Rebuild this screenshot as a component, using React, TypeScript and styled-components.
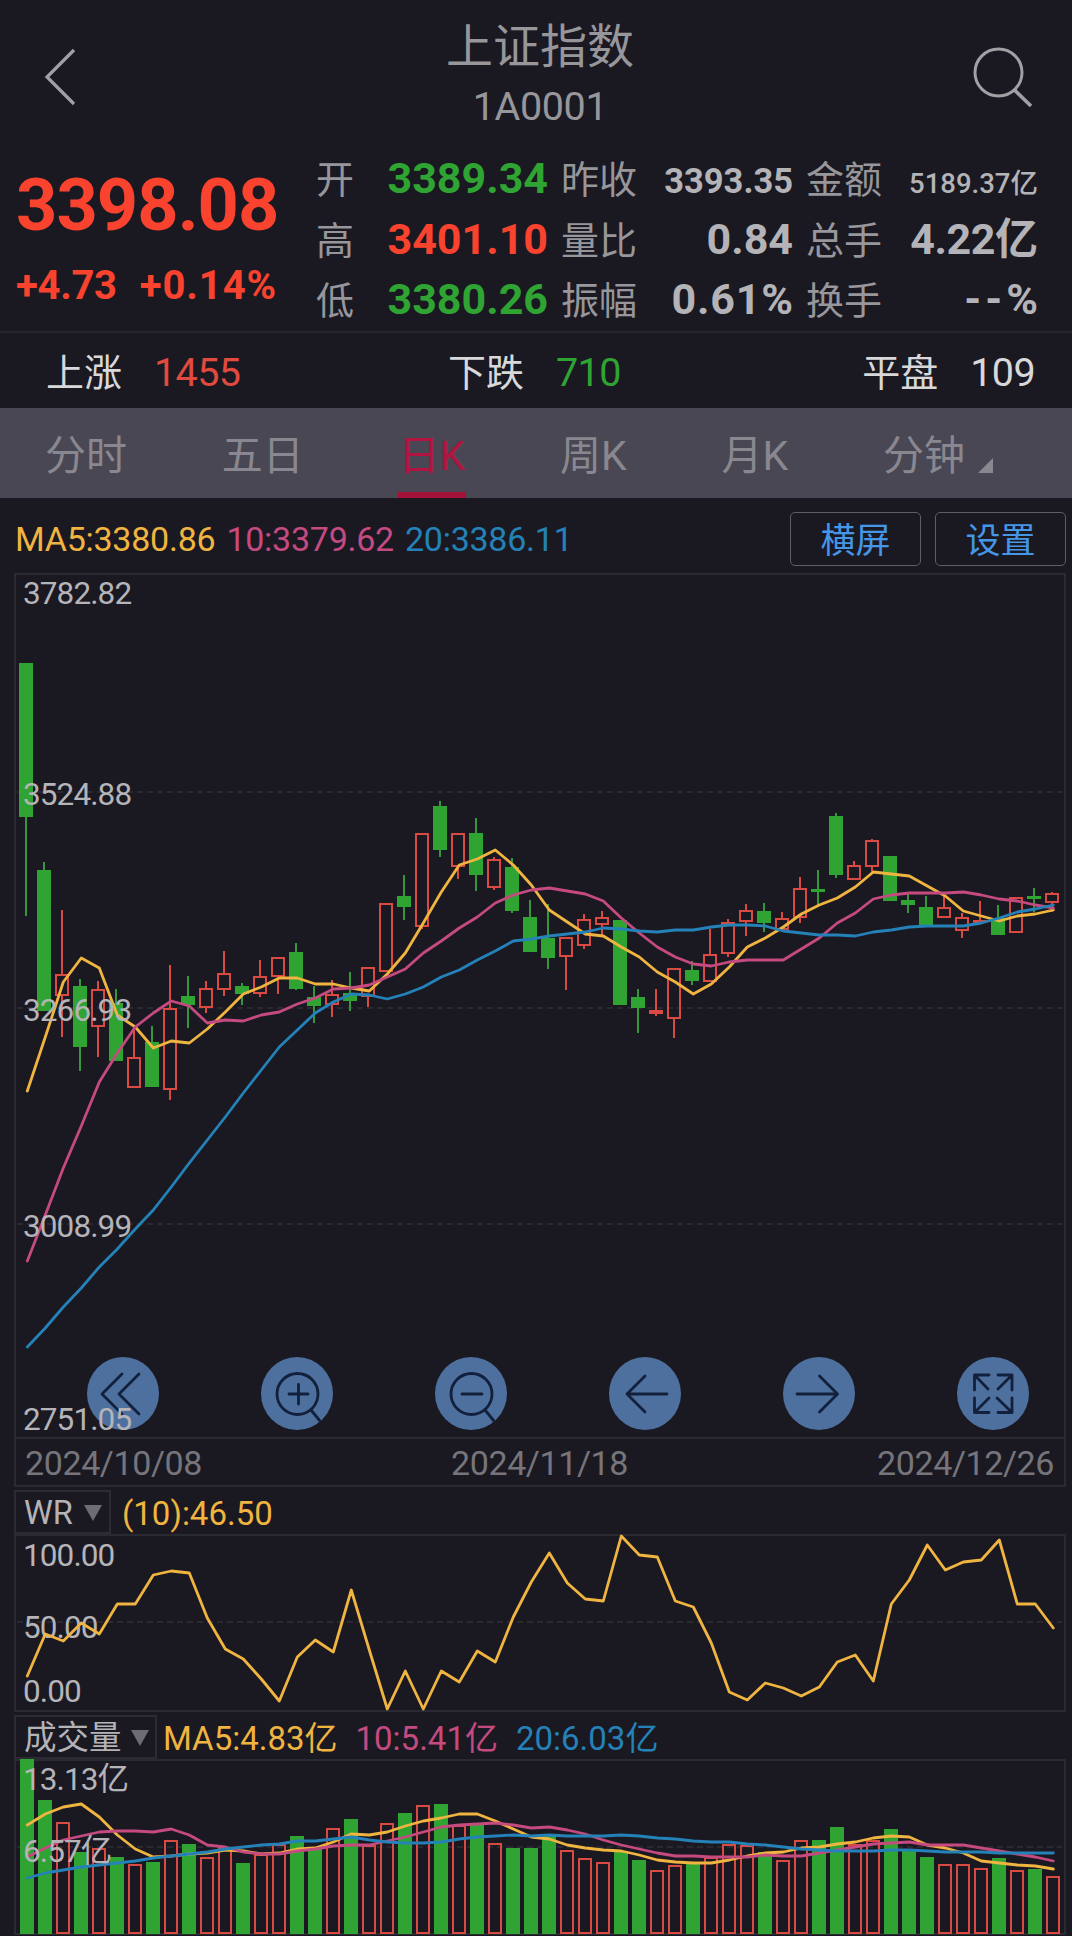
import React from "react";
import styled, { createGlobalStyle } from "styled-components";

const C = {
  bg: "#1a1922",
  line: "#2a2a32",
  dim: "#97969b",
  text: "#b4b3b7",
  red: "#f9432f",
  softRed: "#e04a3f",
  green: "#2fa433",
  yellow: "#f0b440",
  pink: "#c54a80",
  blue: "#2482b8",
};

const FONT = 'Roboto, "Noto Sans CJK SC", sans-serif';

const Global = createGlobalStyle`
  * { box-sizing: border-box; }
  body { margin: 0; background: ${C.bg}; }
`;

const Screen = styled.main`
  width: 1072px;
  height: 1936px;
  overflow: hidden;
  display: flex;
  flex-direction: column;
  background: ${C.bg};
  color: ${C.text};
  font-family: ${FONT};
`;

/* ---------- header ---------- */

const Header = styled.header`
  height: 148px;
  flex: none;
  display: flex;
  justify-content: space-between;
  padding: 46px 39px 0 44px;
`;

const Titles = styled.div`
  display: flex;
  flex-direction: column;
  align-items: center;
  margin-top: -30px;
  padding-left: 31px;
  color: ${C.dim};
`;

const Title = styled.h1`
  margin: 0;
  font-size: 47px;
  line-height: 62px;
  font-weight: 400;
`;

const Code = styled.div`
  font-size: 39.5px;
  line-height: 46px;
  margin-top: 6px;
  letter-spacing: -0.4px;
`;

const HeaderIcon = styled.svg`
  display: block;
  fill: none;
  stroke: #a1a0a5;
  stroke-width: 3;
`;

/* ---------- quote ---------- */

const Quote = styled.section`
  height: 185px;
  flex: none;
  display: flex;
  border-bottom: 2px solid #25242c;
`;

const Main = styled.div`
  width: 316px;
  padding: 21px 0 0 16px;
  color: ${C.red};
  font-weight: 700;
`;

const Price = styled.div`
  font-size: 72px;
  line-height: 74px;
  letter-spacing: -0.9px;
`;

const Change = styled.div`
  display: flex;
  gap: 23px;
  margin-top: 21px;
  font-size: 40px;
  line-height: 44px;
  letter-spacing: -0.3px;
`;

const Percent = styled.span`
  letter-spacing: 0.9px;
`;

const Stats = styled.div`
  display: grid;
  grid-template-columns: 232px 232px 232px;
  grid-template-rows: repeat(3, 60.5px);
  column-gap: 13px;
`;

const Stat = styled.div`
  display: flex;
  align-items: baseline;
  justify-content: space-between;
`;

const StatLabel = styled.span`
  font-size: 38px;
  line-height: 65px;
  color: ${C.dim};
`;

const StatValue = styled.span<{ $color?: string; $size?: number; $weight?: number; $track?: number }>`
  line-height: 1;
  font-weight: ${(p) => p.$weight ?? 700};
  font-size: ${(p) => p.$size ?? 43}px;
  color: ${(p) => p.$color ?? C.text};
  letter-spacing: ${(p) => p.$track ?? 0}px;
  margin-right: ${(p) => -(p.$track ?? 0)}px;
`;

/* ---------- market breadth ---------- */

const Breadth = styled.section`
  height: 75px;
  flex: none;
  display: grid;
  grid-template-columns: 402px 1fr auto;
  padding: 3px 37px 0 46px;
  font-size: 38px;
  line-height: 74px;
  color: #d8d8da;
`;

const BreadthItem = styled.div`
  display: flex;
  gap: 32px;
`;

const Count = styled.span<{ $color?: string }>`
  font-size: 39.5px;
  letter-spacing: -0.6px;
  color: ${(p) => p.$color ?? "inherit"};
`;

/* ---------- tabs ---------- */

const Tabs = styled.nav`
  height: 90px;
  flex: none;
  display: flex;
  justify-content: space-between;
  padding: 0 79px 0 45px;
  background: #494753;
`;

const Tab = styled.div<{ $active?: boolean }>`
  position: relative;
  display: flex;
  font-size: 41px;
  line-height: 97px;
  color: ${(p) => (p.$active ? "#b01540" : "#89878f")};
  &::after {
    content: "";
    display: ${(p) => (p.$active ? "block" : "none")};
    position: absolute;
    left: -1px;
    right: -1px;
    bottom: 0;
    height: 6px;
    background: #a51239;
  }
`;

const Corner = styled.svg`
  display: block;
  margin: 50px 0 0 13px;
  fill: #89878f;
`;

/* ---------- legend ---------- */

const Legend = styled.section`
  height: 75px;
  flex: none;
  display: flex;
  align-items: center;
  padding: 6px 6px 0 15px;
`;

const LegendItem = styled.span<{ $color: string; $gap: number }>`
  font-size: 34px;
  line-height: 44px;
  margin-right: ${(p) => p.$gap}px;
  color: ${(p) => p.$color};
  letter-spacing: -0.25px;
`;

const Actions = styled.div`
  display: flex;
  gap: 14px;
  margin-left: auto;
`;

const Action = styled.button`
  width: 131px;
  height: 54px;
  padding: 5px 0 0;
  border: 1.5px solid #5f5e66;
  border-radius: 5px;
  background: transparent;
  color: #4596e6;
  font: 35px/48px ${FONT};
`;

/* ---------- charts ---------- */

const Panel = styled.section`
  position: relative;
  flex: none;
`;

const Plot = styled.svg`
  position: relative;
  z-index: 1;
  display: block;
  font-family: ${FONT};
`;

const Tools = styled.div`
  position: absolute;
  left: 87px;
  right: 43px;
  bottom: 9px;
  display: flex;
  justify-content: space-between;
`;

const Tool = styled.svg`
  width: 72px;
  height: 73px;
  border-radius: 50%;
  background: #4e709f;
  fill: none;
  stroke: #12203c;
  stroke-width: 2.8;
  stroke-linecap: round;
  stroke-linejoin: round;
`;

const Dates = styled.div`
  height: 48px;
  flex: none;
  display: flex;
  justify-content: space-between;
  margin: 0 6px 0 14px;
  padding: 1px 10px 0 9px;
  border: solid ${C.line};
  border-width: 0 2px 2px 2px;
  font-size: 34px;
  line-height: 47px;
  letter-spacing: -0.4px;
  color: #76757b;
`;

const IndicatorBar = styled.div`
  height: 47px;
  flex: none;
  display: flex;
  align-items: center;
  padding: 2px 0 0 14px;
`;

const Picker = styled.div<{ $width: number; $gap: number }>`
  width: ${(p) => p.$width}px;
  height: 44px;
  padding: 3px 0 0 8px;
  display: flex;
  align-items: center;
  gap: ${(p) => p.$gap}px;
  border: 2px solid #2b2b33;
  font-size: 32.5px;
  line-height: 40px;
`;

const Caret = styled.svg`
  fill: #6d6c72;
`;

const Readings = styled.div<{ $indent: number }>`
  display: flex;
  gap: 18px;
  padding: 4px 0 0 ${(p) => p.$indent}px;
  font-size: 33px;
  line-height: 44px;
`;

const Reading = styled.span<{ $color: string }>`
  color: ${(p) => p.$color};
`;

/* Candles: [kind, body top, body bottom, wick top, wick bottom] */
type Candle = [string, number, number, number, number];
const candles: Candle[] = [
  ["g", 663, 817, 663, 916], ["g", 870, 1011, 862, 1011], ["r", 974, 996, 910, 1037],
  ["g", 986, 1047, 979, 1071], ["r", 989, 1027, 981, 1057], ["g", 1003, 1061, 989, 1061],
  ["r", 1057, 1088, 1030, 1088], ["g", 1042, 1087, 1026, 1087], ["r", 1008, 1090, 965, 1100],
  ["g", 996, 1005, 976, 1028], ["r", 988, 1008, 981, 1013], ["r", 973, 990, 951, 996],
  ["g", 986, 994, 983, 1005], ["r", 976, 994, 960, 997], ["r", 957, 977, 957, 994],
  ["g", 952, 989, 943, 990], ["g", 997, 1006, 986, 1023], ["r", 994, 1005, 980, 1017],
  ["g", 993, 1001, 972, 1011], ["r", 967, 997, 967, 1007], ["r", 903, 972, 903, 972],
  ["g", 896, 907, 875, 920], ["r", 833, 927, 833, 929], ["g", 806, 850, 801, 857],
  ["r", 833, 867, 833, 879], ["g", 833, 875, 818, 891], ["r", 859, 888, 857, 890],
  ["g", 867, 911, 858, 913], ["g", 917, 952, 900, 952], ["g", 938, 958, 904, 969],
  ["r", 937, 957, 937, 990], ["r", 919, 946, 914, 949], ["r", 917, 925, 911, 936],
  ["g", 920, 1005, 920, 1005], ["g", 997, 1008, 989, 1033], ["r", 1010, 1014, 989, 1016],
  ["r", 968, 1019, 968, 1038], ["g", 970, 981, 961, 985], ["r", 954, 982, 929, 982],
  ["r", 922, 954, 919, 957], ["r", 910, 922, 904, 936], ["g", 911, 923, 903, 932],
  ["r", 918, 930, 912, 930], ["r", 888, 918, 877, 923], ["g", 889, 892, 870, 905],
  ["g", 816, 875, 813, 878], ["r", 865, 880, 861, 880], ["r", 840, 867, 839, 872],
  ["g", 856, 901, 856, 901], ["g", 900, 905, 893, 913], ["g", 907, 926, 896, 926],
  ["r", 907, 918, 896, 918], ["r", 917, 931, 913, 938], ["r", 920, 923, 901, 923],
  ["g", 918, 935, 905, 935], ["r", 897, 933, 897, 933], ["g", 896, 899, 888, 912],
  ["r", 893, 903, 892, 912],
];

const ma5 = [1091, 1037, 982, 958, 968, 1015, 1027, 1048, 1041, 1043, 1029, 1012, 994, 987, 978, 978, 984, 984, 988, 991, 974, 953, 923, 892, 865, 859, 850, 865, 885, 910, 922, 934, 936, 947, 957, 972, 982, 994, 984, 967, 947, 938, 927, 914, 905, 898, 887, 872, 874, 876, 886, 896, 911, 916, 921, 916, 914, 910];
const ma10 = [1261, 1215, 1168, 1126, 1082, 1053, 1027, 1013, 1001, 1006, 1023, 1020, 1021, 1015, 1012, 1004, 998, 989, 988, 985, 977, 969, 953, 941, 928, 917, 903, 895, 890, 888, 891, 894, 901, 918, 933, 947, 957, 964, 966, 962, 960, 960, 960, 949, 938, 923, 913, 899, 895, 893, 893, 893, 892, 895, 899, 901, 905, 908];
const ma20 = [1347, 1328, 1307, 1288, 1267, 1249, 1229, 1210, 1187, 1163, 1140, 1117, 1093, 1070, 1047, 1030, 1013, 1002, 994, 995, 999, 994, 987, 977, 970, 960, 951, 941, 939, 936, 934, 932, 928, 929, 931, 932, 930, 930, 927, 925, 925, 926, 931, 933, 935, 935, 936, 932, 930, 927, 926, 926, 926, 923, 918, 912, 909, 905];

const wr = [1676, 1634, 1641, 1623, 1634, 1604, 1604, 1575, 1571, 1573, 1618, 1649, 1659, 1679, 1701, 1657, 1640, 1652, 1590, 1650, 1709, 1671, 1709, 1671, 1682, 1651, 1662, 1617, 1582, 1553, 1583, 1599, 1601, 1536, 1555, 1557, 1601, 1607, 1643, 1692, 1700, 1683, 1688, 1696, 1687, 1662, 1655, 1681, 1604, 1580, 1545, 1570, 1562, 1560, 1540, 1604, 1604, 1628];

const volumes = [1759, 1800, 1822, 1852, 1848, 1857, 1864, 1862, 1840, 1844, 1857, 1847, 1863, 1854, 1844, 1836, 1848, 1828, 1819, 1845, 1823, 1813, 1805, 1804, 1825, 1824, 1843, 1848, 1848, 1834, 1850, 1858, 1862, 1851, 1860, 1870, 1865, 1864, 1857, 1844, 1845, 1852, 1860, 1840, 1840, 1827, 1844, 1840, 1829, 1850, 1857, 1864, 1864, 1868, 1858, 1870, 1869, 1876];
const v5 = [1825, 1814, 1807, 1804, 1817, 1835, 1849, 1857, 1856, 1854, 1853, 1850, 1851, 1854, 1853, 1849, 1848, 1842, 1834, 1835, 1832, 1826, 1821, 1818, 1814, 1814, 1821, 1829, 1837, 1839, 1845, 1848, 1850, 1851, 1855, 1860, 1862, 1863, 1863, 1860, 1856, 1853, 1852, 1848, 1847, 1844, 1842, 1838, 1836, 1837, 1845, 1848, 1853, 1861, 1863, 1865, 1866, 1869];
const v10 = [1857, 1848, 1840, 1836, 1832, 1831, 1831, 1832, 1829, 1835, 1845, 1847, 1852, 1854, 1854, 1851, 1849, 1846, 1845, 1845, 1841, 1837, 1832, 1827, 1825, 1824, 1823, 1825, 1828, 1827, 1830, 1834, 1840, 1845, 1849, 1853, 1856, 1856, 1857, 1857, 1857, 1855, 1856, 1856, 1853, 1850, 1847, 1844, 1843, 1842, 1845, 1845, 1845, 1848, 1851, 1854, 1857, 1861];
const v20 = [1878, 1873, 1870, 1867, 1865, 1863, 1861, 1858, 1856, 1854, 1852, 1849, 1847, 1845, 1844, 1841, 1841, 1839, 1837, 1840, 1842, 1843, 1843, 1842, 1839, 1837, 1836, 1835, 1836, 1835, 1836, 1836, 1836, 1835, 1836, 1838, 1839, 1841, 1842, 1842, 1844, 1845, 1847, 1849, 1850, 1851, 1851, 1851, 1850, 1850, 1851, 1852, 1852, 1852, 1853, 1853, 1853, 1853];

const STEP = 18;
const cx = (i: number) => 26 + i * STEP;

const Line = ({ ys, color }: { ys: number[]; color: string }) => (
  <polyline
    points={ys.map((y, i) => `${cx(i) + 1.3},${y}`).join(" ")}
    fill="none"
    stroke={color}
    strokeWidth={2.8}
    strokeLinejoin="round"
    strokeLinecap="round"
  />
);

const Frame = ({ y, h }: { y: number; h: number }) => (
  <rect x={15} y={y} width={1050} height={h} fill="none" stroke={C.line} strokeWidth={2} />
);

const Grid = ({ y }: { y: number }) => (
  <line x1={17} x2={1062} y1={y} y2={y} stroke="#29292f" strokeWidth={1.8} strokeDasharray="6 4" />
);

const AxisText = ({ y, children }: { y: number; children: string }) => (
  <text x={23} y={y} fill="#b5b4b9" fontSize={31.5} letterSpacing={-0.9}>
    {children}
  </text>
);

const Bar = ({ x, top, bottom, up }: { x: number; top: number; bottom: number; up: boolean }) =>
  up ? (
    <rect x={x - 6} y={top + 1} width={12} height={Math.max(bottom - top - 2, 1)} fill="none" stroke="#d84a42" strokeWidth={2} />
  ) : (
    <rect x={x - 7} y={top} width={14} height={bottom - top} fill={C.green} />
  );

const PriceChart = () => (
  <Plot width={1072} height={866} viewBox="0 573 1072 866">
    <Frame y={574} h={864} />
    {[792, 1008, 1224].map((y) => <Grid key={y} y={y} />)}
    {candles.map(([k, t, b, wt, wb], i) => {
      const x = cx(i);
      const color = k === "r" ? "#d84a42" : "#37963b";
      return (
        <g key={i}>
          {wt < t && <line x1={x} x2={x} y1={wt} y2={t} stroke={color} strokeWidth={2} />}
          {wb > b && <line x1={x} x2={x} y1={b} y2={wb} stroke={color} strokeWidth={2} />}
          <Bar x={x} top={t} bottom={b} up={k === "r"} />
        </g>
      );
    })}
    <Line ys={ma5} color={C.yellow} />
    <Line ys={ma10} color={C.pink} />
    <Line ys={ma20} color={C.blue} />
    <AxisText y={604}>3782.82</AxisText>
    <AxisText y={805}>3524.88</AxisText>
    <AxisText y={1021}>3266.93</AxisText>
    <AxisText y={1237}>3008.99</AxisText>
    <AxisText y={1430}>2751.05</AxisText>
  </Plot>
);

const WrChart = () => (
  <Plot width={1072} height={178} viewBox="0 1534 1072 178">
    <Frame y={1535} h={176} />
    <Grid y={1622} />
    <AxisText y={1566}>100.00</AxisText>
    <AxisText y={1638}>50.00</AxisText>
    <AxisText y={1702}>0.00</AxisText>
    <Line ys={wr} color={C.yellow} />
  </Plot>
);

const VolumeChart = () => (
  <Plot width={1072} height={177} viewBox="0 1759 1072 177">
    <Frame y={1760} h={174} />
    <Grid y={1847} />
    {volumes.map((t, i) => (
      <Bar key={i} x={cx(i) + 1} top={t} bottom={1934} up={candles[i][0] === "r"} />
    ))}
    <Line ys={v5} color={C.yellow} />
    <Line ys={v10} color={C.pink} />
    <Line ys={v20} color={C.blue} />
    <AxisText y={1790}>13.13亿</AxisText>
    <AxisText y={1862}>6.57亿</AxisText>
  </Plot>
);

const toolPaths = [
  "M35 17 L15 37 L35 57 M52 17 L32 37 L52 57",
  "M57 37 A20.5 20.5 0 1 1 16 37 A20.5 20.5 0 1 1 57 37 M28 37 H47 M37.5 27.5 V47 M50 53 L59 64",
  "M57 37 A20.5 20.5 0 1 1 16 37 A20.5 20.5 0 1 1 57 37 M27 37 H47 M50 53 L59 64",
  "M58 37 H18 M36 19 L18 37 L36 55",
  "M14 37 H54 M36.5 19 L54.5 37 L36.5 55",
  "M32 18 H17.5 V33 M17.5 18 L31 32 M41 18 H55 V33 M55 18 L41 32 M17.5 41 V55.5 H32 M17.5 55.5 L32 41 M55 41 V55.5 H41 M55 55.5 L40 41",
];

const Down = () => (
  <Caret width={18} height={16} viewBox="0 0 18 16">
    <path d="M0 0H18L9 16Z" />
  </Caret>
);

export default function App() {
  return (
    <>
      <Global />
      <Screen>
        <Header>
          <HeaderIcon width={34} height={62} viewBox="44 46 34 62">
            <path d="M74 50L47 77L74 104" strokeWidth={3.2} />
          </HeaderIcon>
          <Titles>
            <Title>上证指数</Title>
            <Code>1A0001</Code>
          </Titles>
          <HeaderIcon width={62} height={62} viewBox="971 46 62 62">
            <circle cx={998.5} cy={72.5} r={23.5} />
            <path d="M1014.5 90L1031 106" strokeWidth={3.6} />
          </HeaderIcon>
        </Header>

        <Quote>
          <Main>
            <Price>3398.08</Price>
            <Change>
              <span>+4.73</span>
              <Percent>+0.14%</Percent>
            </Change>
          </Main>
          <Stats>
            <Stat><StatLabel>开</StatLabel><StatValue $color={C.green}>3389.34</StatValue></Stat>
            <Stat><StatLabel>昨收</StatLabel><StatValue $size={34.5}>3393.35</StatValue></Stat>
            <Stat><StatLabel>金额</StatLabel><StatValue $size={27.5} $weight={500}>5189.37亿</StatValue></Stat>
            <Stat><StatLabel>高</StatLabel><StatValue $color={C.red}>3401.10</StatValue></Stat>
            <Stat><StatLabel>量比</StatLabel><StatValue>0.84</StatValue></Stat>
            <Stat><StatLabel>总手</StatLabel><StatValue $track={-0.4}>4.22亿</StatValue></Stat>
            <Stat><StatLabel>低</StatLabel><StatValue $color={C.green}>3380.26</StatValue></Stat>
            <Stat><StatLabel>振幅</StatLabel><StatValue $track={0.8}>0.61%</StatValue></Stat>
            <Stat><StatLabel>换手</StatLabel><StatValue $track={4}>--%</StatValue></Stat>
          </Stats>
        </Quote>

        <Breadth>
          <BreadthItem>上涨<Count $color={C.softRed}>1455</Count></BreadthItem>
          <BreadthItem>下跌<Count $color={C.green}>710</Count></BreadthItem>
          <BreadthItem>平盘<Count>109</Count></BreadthItem>
        </Breadth>

        <Tabs>
          <Tab>分时</Tab>
          <Tab>五日</Tab>
          <Tab $active>日K</Tab>
          <Tab>周K</Tab>
          <Tab>月K</Tab>
          <Tab>
            分钟
            <Corner width={15} height={15} viewBox="0 0 15 15"><path d="M15 0V15H0Z" /></Corner>
          </Tab>
        </Tabs>

        <Legend>
          <LegendItem $color={C.yellow} $gap={11}>MA5:3380.86</LegendItem>
          <LegendItem $color={C.pink} $gap={11}>10:3379.62</LegendItem>
          <LegendItem $color={C.blue} $gap={0}>20:3386.11</LegendItem>
          <Actions>
            <Action>横屏</Action>
            <Action>设置</Action>
          </Actions>
        </Legend>

        <Panel>
          <Tools>
            {toolPaths.map((d) => (
              <Tool key={d} viewBox="0 0 72 73"><path d={d} /></Tool>
            ))}
          </Tools>
          <PriceChart />
        </Panel>
        <Dates>
          <span>2024/10/08</span>
          <span>2024/11/18</span>
          <span>2024/12/26</span>
        </Dates>

        <IndicatorBar>
          <Picker $width={97} $gap={11}>WR<Down /></Picker>
          <Readings $indent={11}>
            <Reading $color={C.yellow}>(10):46.50</Reading>
          </Readings>
        </IndicatorBar>
        <Panel><WrChart /></Panel>

        <IndicatorBar>
          <Picker $width={143} $gap={9}>成交量<Down /></Picker>
          <Readings $indent={6}>
            <Reading $color={C.yellow}>MA5:4.83亿</Reading>
            <Reading $color={C.pink}>10:5.41亿</Reading>
            <Reading $color={C.blue}>20:6.03亿</Reading>
          </Readings>
        </IndicatorBar>
        <Panel><VolumeChart /></Panel>
      </Screen>
    </>
  );
}
